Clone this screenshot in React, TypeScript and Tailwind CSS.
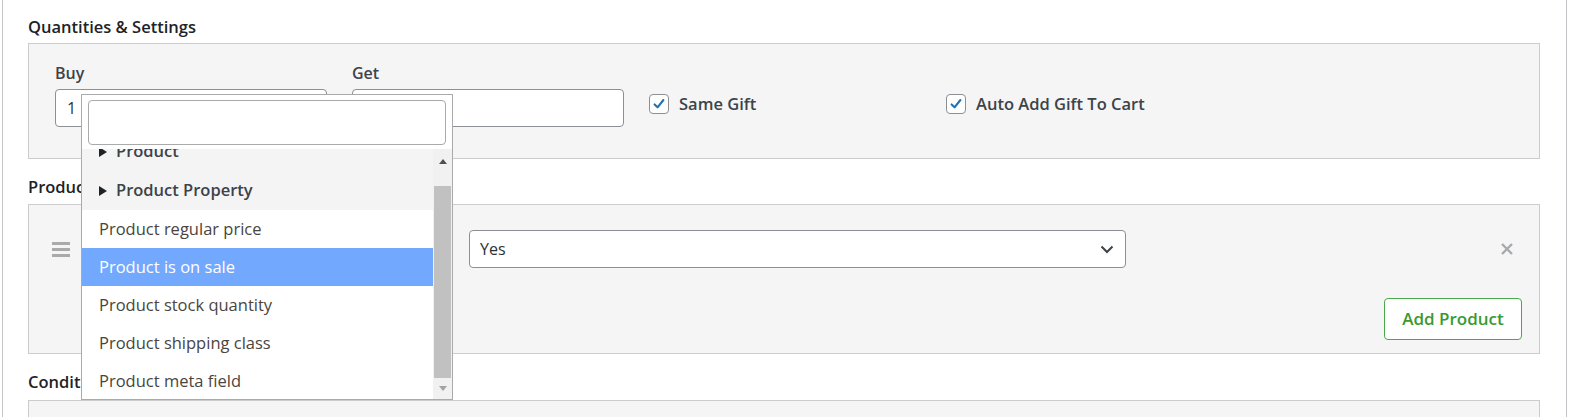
import { FC } from "react";

const font = { fontFamily: '"Open Sans", "Liberation Sans", sans-serif' };

const Checkbox: FC<{ label: string }> = ({ label }) => (
  <label className="flex items-center gap-[10px]">
    <span className="flex h-[20px] w-[20px] items-center justify-center rounded-[4px] border border-[#8c8f94] bg-white">
      <svg viewBox="0 0 20 20" className="h-[16px] w-[16px]">
        <path d="M4.5 10.5 L8.2 14.2 L15.5 5" fill="none" stroke="#2271b1" strokeWidth="2.6" strokeLinecap="round" strokeLinejoin="round" />
      </svg>
    </span>
    <span className="text-[16.5px] leading-[20px] font-semibold text-[#3c434a]">{label}</span>
  </label>
);

const Heading: FC<{ title: string }> = ({ title }) => (
  <h3 className="h-[20px] text-[16.5px] leading-[20px] font-semibold text-[#1d2327]">{title}</h3>
);

const options = [
  "Product regular price",
  "Product is on sale",
  "Product stock quantity",
  "Product shipping class",
  "Product meta field",
];

const Dropdown: FC = () => (
  <div className="absolute left-[81px] top-[94px] h-[306px] w-[372px] border border-[#aaa] bg-white">
    <div className="px-[6px] pt-[5px] pb-[4px]">
      <div className="h-[45px] w-full rounded-[4px] border border-[#aaa] bg-white" />
    </div>
    <div className="flex h-[250px] overflow-hidden">
      <div className="flex-1 overflow-hidden">
        <div className="-mt-[17px]">
          {["Product", "Product Property"].map((g) => (
            <div key={g} className="flex h-[39px] items-center gap-[9px] bg-[#f4f4f4] pl-[17px] text-[16.5px] font-semibold text-[#3c434a]">
              <svg viewBox="0 0 8 10" className="h-[10px] w-[8px]">
                <path d="M0 0 L8 5 L0 10 Z" fill="#1d2327" />
              </svg>
              {g}
            </div>
          ))}
          {options.map((o) => (
            <div
              key={o}
              className={
                o === "Product is on sale"
                  ? "flex h-[38px] items-center bg-[#73a8ff] pl-[17px] text-[16.5px] text-white"
                  : "flex h-[38px] items-center bg-white pl-[17px] text-[16.5px] text-[#4a4540]"
              }
            >
              {o}
            </div>
          ))}
        </div>
      </div>
      <div className="flex w-[19px] flex-col items-center bg-[#f1f1f1]">
        <div className="flex h-[37px] items-start pt-[10px]">
          <svg viewBox="0 0 8 5" className="h-[5px] w-[8px]">
            <path d="M0 5 L4 0 L8 5 Z" fill="#505050" />
          </svg>
        </div>
        <div className="h-[192px] w-[17px] bg-[#c1c1c1]" />
        <div className="flex flex-1 items-center">
          <svg viewBox="0 0 8 5" className="h-[5px] w-[8px]">
            <path d="M0 0 L4 5 L8 0 Z" fill="#a3a3a3" />
          </svg>
        </div>
      </div>
    </div>
  </div>
);

const App: FC = () => {
  return (
    <div className="relative h-[417px] w-[1570px] overflow-hidden bg-white" style={font}>
      <div className="ml-[2px] h-full w-[1565px] border-x border-[#c3c4c7] pl-[25px] pr-[25px] pt-[17px]">
        <Heading title="Quantities & Settings" />
        <div className="mt-[6px] h-[116px] w-[1512px] border border-[#ccc] bg-[#f5f5f5] pl-[26px] pt-[19px]">
          <div className="grid grid-cols-[272px_272px_272px_272px] gap-x-[25px]">
            <div>
              <div className="h-[20px] text-[16px] leading-[20px] font-semibold text-[#3c434a]">Buy</div>
              <div className="mt-[6px] flex h-[38px] items-center rounded-[4px] border border-[#8c8f94] bg-white px-[11px] text-[16px] text-[#2c3338]">
                1
              </div>
            </div>
            <div>
              <div className="h-[20px] text-[16px] leading-[20px] font-semibold text-[#3c434a]">Get</div>
              <div className="mt-[6px] h-[38px] rounded-[4px] border border-[#8c8f94] bg-white" />
            </div>
            <div className="pt-[31px]">
              <Checkbox label="Same Gift" />
            </div>
            <div className="pt-[31px]">
              <Checkbox label="Auto Add Gift To Cart" />
            </div>
          </div>
        </div>

        <div className="mt-[18px]">
          <Heading title="Products" />
        </div>
        <div className="mt-[7px] h-[150px] w-[1512px] border border-[#ccc] bg-[#f5f5f5] pt-[25px] pr-[17px]">
          <div className="flex h-[38px] items-center">
            <div className="ml-[23px] flex w-[18px] flex-col gap-[3px]">
              <span className="h-[3px] w-[18px] bg-[#aaa]" />
              <span className="h-[3px] w-[18px] bg-[#aaa]" />
              <span className="h-[3px] w-[18px] bg-[#aaa]" />
            </div>
            <div className="ml-[12px] h-[38px] w-[370px] rounded-[4px] border border-[#8c8f94] bg-white" />
            <div className="ml-[17px] flex h-[38px] w-[657px] items-center justify-between rounded-[4px] border border-[#8c8f94] bg-white pl-[10px] pr-[11px] text-[16px] text-[#2c3338]">
              Yes
              <svg viewBox="0 0 14 9" className="h-[9px] w-[14px]">
                <path d="M1.5 1.5 L7 7 L12.5 1.5" fill="none" stroke="#3c434a" strokeWidth="2" />
              </svg>
            </div>
            <div className="ml-auto mr-[8px] flex h-[14px] w-[14px] items-center justify-center">
              <svg viewBox="0 0 12 12" className="h-[12px] w-[12px]">
                <path d="M1 1 L11 11 M11 1 L1 11" stroke="#a7aaad" strokeWidth="2.4" />
              </svg>
            </div>
          </div>
          <div className="mt-[30px] flex justify-end">
            <button className="h-[42px] w-[138px] rounded-[4px] border border-[#4aa84a] bg-white text-[17px] font-semibold text-[#3a9a2f]">
              Add Product
            </button>
          </div>
        </div>

        <div className="mt-[18px]">
          <Heading title="Conditions" />
        </div>
        <div className="mt-[8px] h-[40px] w-[1512px] border border-[#ccc] bg-[#f5f5f5]" />
      </div>
      <Dropdown />
    </div>
  );
};

export default App;
